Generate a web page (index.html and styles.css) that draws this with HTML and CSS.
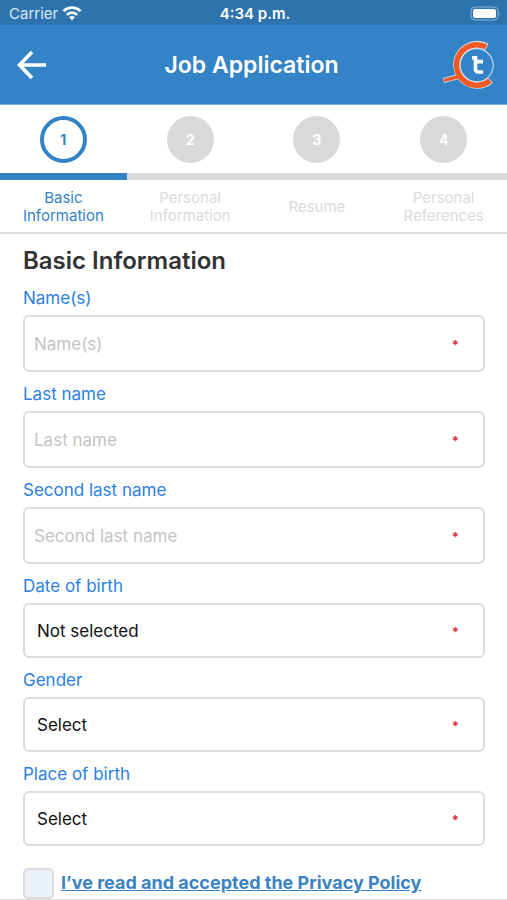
FILE: index.html
```html
<!DOCTYPE html>
<html lang="en">
<head>
<meta charset="utf-8">
<meta name="viewport" content="width=device-width, initial-scale=1">
<title>Job Application</title>
<link rel="stylesheet" href="styles.css">
</head>
<body>
<div class="status">
  <div class="carrier">
    <span>Carrier</span>
    <svg width="20" height="15" viewBox="0 0 20 15" fill="none" stroke="#fff" stroke-width="2.800" aria-hidden="true">
      <path d="M1.500 5.200A12 12 0 0 1 18.500 5.200"/>
      <path d="M4.800 8.900A7.200 7.200 0 0 1 15.200 8.900"/>
      <path d="M10 14.500L7 11.300A4.600 4.600 0 0 1 13 11.300Z" fill="#fff" stroke="none"/>
    </svg>
  </div>
  <span class="clock">4:34 p.m.</span>
  <svg class="battery" width="31" height="15" viewBox="0 0 31 15" aria-hidden="true">
    <rect x="1" y="1" width="27" height="13" rx="4" fill="none" stroke="#8cb5d8"/>
    <rect x="3" y="3" width="23" height="9" rx="2" fill="#fff"/>
    <path d="M29.300 5.500Q31 7.500 29.300 9.500Z" fill="#8cb5d8"/>
  </svg>
</div>
<header class="header">
  <button class="back" type="button" aria-label="Back">
    <svg width="30" height="30" viewBox="0 0 30 30" fill="none" stroke="#fff" stroke-width="3.600" aria-hidden="true">
      <path d="M16 2L3.500 15L16 28M3.500 15H30"/>
    </svg>
  </button>
  <h1>Job Application</h1>
  <svg class="logo" width="54" height="50" viewBox="0 0 54 50" fill="none" aria-hidden="true">
    <circle cx="35.500" cy="25.300" r="16.700" stroke="#b9d5ec" stroke-width="1.200"/>
    <g stroke="#d8dde2">
      <path d="M45.800 6.900A20.300 20.300 0 1 0 49.500 40.200" stroke-width="7.400"/>
      <path d="M2.500 40.500L18.500 36.400" stroke-width="5"/>
    </g>
    <g stroke="#f15a24">
      <path d="M45 6.900A20.300 20.300 0 1 0 48.900 40.600" stroke-width="5.400"/>
      <path d="M3 40.400L19 36.300" stroke-width="3.400"/>
    </g>
    <path d="M34.500 16V29Q34.500 32 37.500 32H42M31 17.800H34.500M34.500 21.600H42" stroke="#fff" stroke-width="3.600"/>
  </svg>
</header>
<nav class="steps" aria-label="Progress">
  <div class="step current"><span class="number">1</span><span class="bar"></span><span class="caption">Basic Information</span></div>
  <div class="step"><span class="number">2</span><span class="bar"></span><span class="caption">Personal Information</span></div>
  <div class="step"><span class="number">3</span><span class="bar"></span><span class="caption">Resume</span></div>
  <div class="step"><span class="number">4</span><span class="bar"></span><span class="caption">Personal References</span></div>
</nav>
<form class="form">
  <h2>Basic Information</h2>
  <div class="field">
    <label for="name">Name(s)</label>
    <div class="box"><input id="name" type="text" placeholder="Name(s)"><span class="required">*</span></div>
  </div>
  <div class="field">
    <label for="last">Last name</label>
    <div class="box"><input id="last" type="text" placeholder="Last name"><span class="required">*</span></div>
  </div>
  <div class="field">
    <label for="second">Second last name</label>
    <div class="box"><input id="second" type="text" placeholder="Second last name"><span class="required">*</span></div>
  </div>
  <div class="field">
    <label for="birth">Date of birth</label>
    <div class="box pick"><button id="birth" type="button">Not selected</button><span class="required">*</span></div>
  </div>
  <div class="field">
    <label for="gender">Gender</label>
    <div class="box pick"><select id="gender"><option>Select</option></select><span class="required">*</span></div>
  </div>
  <div class="field">
    <label for="place">Place of birth</label>
    <div class="box pick"><select id="place"><option>Select</option></select><span class="required">*</span></div>
  </div>
  <div class="consent">
    <input id="accept" type="checkbox" aria-labelledby="policy">
    <a id="policy" href="#policy">I’ve read and accepted the Privacy Policy</a>
  </div>
</form>
</body>
</html>
```
FILE: styles.css
```css
* {
  box-sizing: border-box;
}

body {
  margin: 0;
  background: #fff;
  font-family: Inter, "Liberation Sans", sans-serif;
}

.status {
  display: grid;
  grid-template-columns: 1fr auto 1fr;
  align-items: center;
  height: 25px;
  padding: 2px 6px 0 9px;
  background: #2d73ae;
  color: #fff;
  font-size: 15px;
}

.carrier {
  display: flex;
  align-items: center;
  gap: 4px;
  color: #dceaf5;
}

.clock {
  font-weight: 600;
}

.battery {
  justify-self: end;
}

.header {
  display: grid;
  grid-template-columns: 1fr auto 1fr;
  align-items: center;
  height: 80px;
  padding: 0 12px 0 16px;
  border-bottom: 1px solid #78addb;
  background: #3383c6;
  color: #fff;
}

.back {
  display: flex;
  justify-self: start;
  padding: 0;
  border: 0;
  background: none;
}

h1 {
  margin: 0;
  padding-right: 8px;
  font-size: 23px;
  font-weight: 600;
}

.logo {
  justify-self: end;
}

.steps {
  display: grid;
  grid-template-columns: repeat(4, 1fr);
  border-bottom: 2px solid #dedede;
}

.step {
  display: flex;
  flex-direction: column;
  align-items: center;
  padding-top: 11px;
  color: #dadada;
}

.number {
  display: flex;
  align-items: center;
  justify-content: center;
  width: 47px;
  height: 47px;
  border-radius: 50%;
  background: #d9d9d9;
  color: #fff;
  font-size: 14px;
  font-weight: 700;
}

.bar {
  width: 100%;
  height: 7px;
  margin-top: 10px;
  background: #d9d9d9;
}

.caption {
  display: flex;
  align-items: center;
  height: 52px;
  padding: 2px 20px 0;
  font-size: 15px;
  line-height: 18px;
  text-align: center;
}

.current {
  color: #3383c6;
}

.current .number {
  border: 4px solid #3383c6;
  background: #fff;
  color: #3383c6;
}

.current .bar {
  background: #3383c6;
}

.form {
  padding: 12px 22px 0 23px;
  border-bottom: 1px solid #d9d9d9;
}

h2 {
  margin: 0;
  color: #333;
  font-size: 24px;
  font-weight: 600;
  line-height: 30px;
}

.field {
  padding-top: 11px;
}

.field label {
  display: block;
  height: 28px;
  color: #2b80e0;
  font-size: 17px;
  line-height: 22px;
}

.box {
  display: flex;
  align-items: center;
  height: 57px;
  padding-right: 24px;
  border: 2px solid #dcdcdc;
  border-radius: 6px;
}

.pick {
  height: 55px;
}

.box input,
.box button,
.box select {
  flex: 1;
  min-width: 0;
  height: 100%;
  padding: 0 9px;
  border: 0;
  background: none;
  color: #111;
  font-family: inherit;
  font-size: 17px;
  text-align: left;
  appearance: none;
}

.box button,
.box select {
  padding: 0 12px;
}

.box input::placeholder {
  color: #c4c4c4;
  opacity: 1;
}

.required {
  padding-top: 3px;
  color: #dc3545;
  font-size: 13px;
  font-weight: 700;
}

.consent {
  display: flex;
  align-items: center;
  gap: 7px;
  padding-top: 22px;
}

.consent input {
  width: 31px;
  height: 31px;
  margin: 0;
  border: 2px solid #dcdcdc;
  border-radius: 5px;
  background: #eaf1fa;
  appearance: none;
}

.consent a {
  padding-bottom: 3px;
  color: #3b83c0;
  font-size: 18px;
  font-weight: 700;
}
```
